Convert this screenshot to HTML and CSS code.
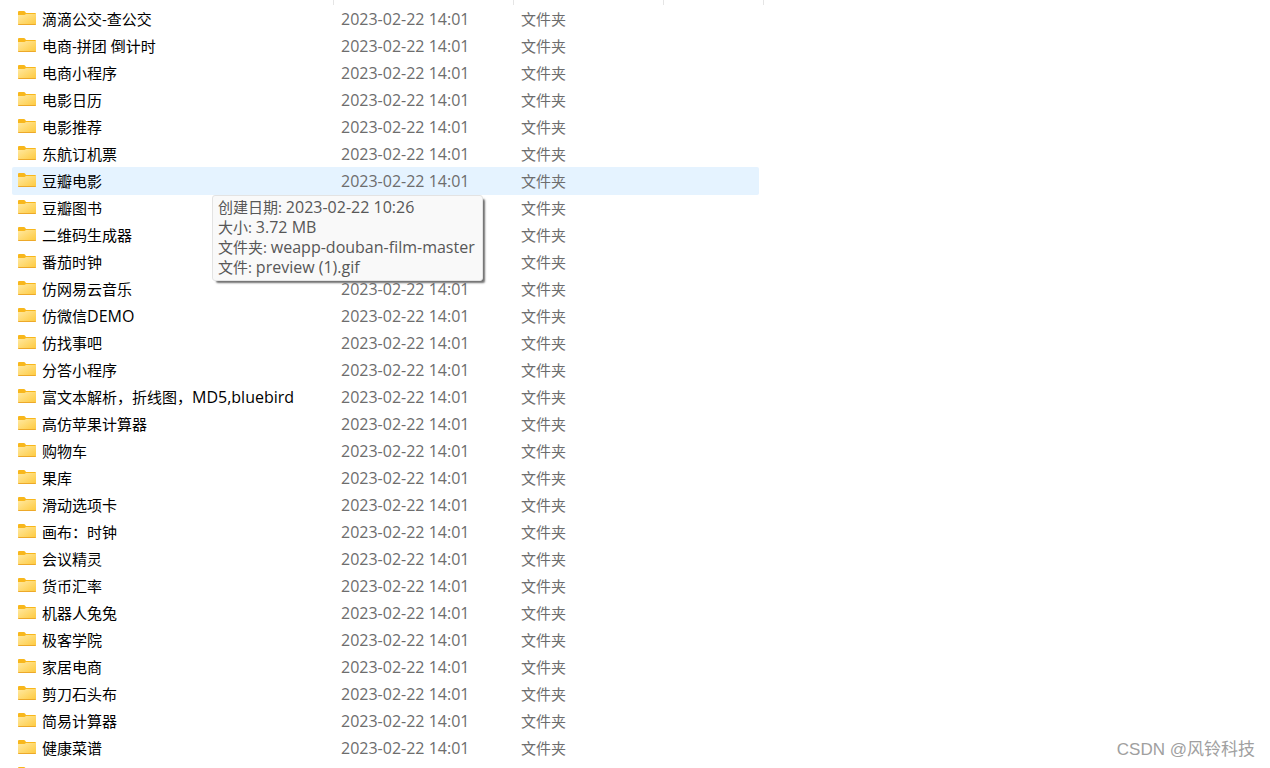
FILE: index.html
```html
<!DOCTYPE html>
<html lang="zh-CN">
<head>
<meta charset="utf-8">
<title>文件夹</title>
<link rel="stylesheet" href="styles.css">
</head>
<body>
<svg class="defs" aria-hidden="true">
  <defs>
    <linearGradient id="front" x1="0" y1="0" x2="1" y2="1">
      <stop offset="0" stop-color="#ffe9a2"/>
      <stop offset="1" stop-color="#fec93c"/>
    </linearGradient>
    <symbol id="folder" viewBox="0 0 18 14">
      <path d="M0 1Q0 0 1 0H6Q6.600 0 7 .5L8 2H17Q18 2 18 3V8H0Z" fill="#f8b71c"/>
      <path d="M0 4H6.500L8 3H18V13Q18 14 17 14H1Q0 14 0 13Z" fill="url(#front)"/>
      <path d="M0 13H18Q18 14 17 14H1Q0 14 0 13Z" fill="#eda92a"/>
    </symbol>
  </defs>
</svg>
<main class="explorer">
  <div class="column-ticks"><span></span><span></span><span></span><span></span></div>
  <table class="files">
    <colgroup><col class="col-name"><col class="col-date"><col class="col-type"><col class="col-size"></colgroup>
    <tbody>
      <tr><td><div class="name"><svg class="icon"><use href="#folder"/></svg>滴滴公交-查公交</div></td><td class="date">2023-02-22 14:01</td><td>文件夹</td><td></td></tr>
      <tr><td><div class="name"><svg class="icon"><use href="#folder"/></svg>电商-拼团 倒计时</div></td><td class="date">2023-02-22 14:01</td><td>文件夹</td><td></td></tr>
      <tr><td><div class="name"><svg class="icon"><use href="#folder"/></svg>电商小程序</div></td><td class="date">2023-02-22 14:01</td><td>文件夹</td><td></td></tr>
      <tr><td><div class="name"><svg class="icon"><use href="#folder"/></svg>电影日历</div></td><td class="date">2023-02-22 14:01</td><td>文件夹</td><td></td></tr>
      <tr><td><div class="name"><svg class="icon"><use href="#folder"/></svg>电影推荐</div></td><td class="date">2023-02-22 14:01</td><td>文件夹</td><td></td></tr>
      <tr><td><div class="name"><svg class="icon"><use href="#folder"/></svg>东航订机票</div></td><td class="date">2023-02-22 14:01</td><td>文件夹</td><td></td></tr>
      <tr class="hovered"><td><div class="name"><svg class="icon"><use href="#folder"/></svg>豆瓣电影</div></td><td class="date">2023-02-22 14:01</td><td>文件夹</td><td></td></tr>
      <tr><td><div class="name"><svg class="icon"><use href="#folder"/></svg>豆瓣图书</div></td><td class="date">2023-02-22 14:01</td><td>文件夹</td><td></td></tr>
      <tr><td><div class="name"><svg class="icon"><use href="#folder"/></svg>二维码生成器</div></td><td class="date">2023-02-22 14:01</td><td>文件夹</td><td></td></tr>
      <tr><td><div class="name"><svg class="icon"><use href="#folder"/></svg>番茄时钟</div></td><td class="date">2023-02-22 14:01</td><td>文件夹</td><td></td></tr>
      <tr><td><div class="name"><svg class="icon"><use href="#folder"/></svg>仿网易云音乐</div></td><td class="date">2023-02-22 14:01</td><td>文件夹</td><td></td></tr>
      <tr><td><div class="name"><svg class="icon"><use href="#folder"/></svg><span>仿微信<span class="latin">DEMO</span></span></div></td><td class="date">2023-02-22 14:01</td><td>文件夹</td><td></td></tr>
      <tr><td><div class="name"><svg class="icon"><use href="#folder"/></svg>仿找事吧</div></td><td class="date">2023-02-22 14:01</td><td>文件夹</td><td></td></tr>
      <tr><td><div class="name"><svg class="icon"><use href="#folder"/></svg>分答小程序</div></td><td class="date">2023-02-22 14:01</td><td>文件夹</td><td></td></tr>
      <tr><td><div class="name"><svg class="icon"><use href="#folder"/></svg><span>富文本解析，折线图，<span class="latin">MD5,bluebird</span></span></div></td><td class="date">2023-02-22 14:01</td><td>文件夹</td><td></td></tr>
      <tr><td><div class="name"><svg class="icon"><use href="#folder"/></svg>高仿苹果计算器</div></td><td class="date">2023-02-22 14:01</td><td>文件夹</td><td></td></tr>
      <tr><td><div class="name"><svg class="icon"><use href="#folder"/></svg>购物车</div></td><td class="date">2023-02-22 14:01</td><td>文件夹</td><td></td></tr>
      <tr><td><div class="name"><svg class="icon"><use href="#folder"/></svg>果库</div></td><td class="date">2023-02-22 14:01</td><td>文件夹</td><td></td></tr>
      <tr><td><div class="name"><svg class="icon"><use href="#folder"/></svg>滑动选项卡</div></td><td class="date">2023-02-22 14:01</td><td>文件夹</td><td></td></tr>
      <tr><td><div class="name"><svg class="icon"><use href="#folder"/></svg>画布：时钟</div></td><td class="date">2023-02-22 14:01</td><td>文件夹</td><td></td></tr>
      <tr><td><div class="name"><svg class="icon"><use href="#folder"/></svg>会议精灵</div></td><td class="date">2023-02-22 14:01</td><td>文件夹</td><td></td></tr>
      <tr><td><div class="name"><svg class="icon"><use href="#folder"/></svg>货币汇率</div></td><td class="date">2023-02-22 14:01</td><td>文件夹</td><td></td></tr>
      <tr><td><div class="name"><svg class="icon"><use href="#folder"/></svg>机器人兔兔</div></td><td class="date">2023-02-22 14:01</td><td>文件夹</td><td></td></tr>
      <tr><td><div class="name"><svg class="icon"><use href="#folder"/></svg>极客学院</div></td><td class="date">2023-02-22 14:01</td><td>文件夹</td><td></td></tr>
      <tr><td><div class="name"><svg class="icon"><use href="#folder"/></svg>家居电商</div></td><td class="date">2023-02-22 14:01</td><td>文件夹</td><td></td></tr>
      <tr><td><div class="name"><svg class="icon"><use href="#folder"/></svg>剪刀石头布</div></td><td class="date">2023-02-22 14:01</td><td>文件夹</td><td></td></tr>
      <tr><td><div class="name"><svg class="icon"><use href="#folder"/></svg>简易计算器</div></td><td class="date">2023-02-22 14:01</td><td>文件夹</td><td></td></tr>
      <tr><td><div class="name"><svg class="icon"><use href="#folder"/></svg>健康菜谱</div></td><td class="date">2023-02-22 14:01</td><td>文件夹</td><td></td></tr>
      <tr><td><div class="name"><svg class="icon"><use href="#folder"/></svg></div></td><td></td><td></td><td></td></tr>
    </tbody>
  </table>
  <div class="tooltip" role="tooltip">
    <div>创建日期: <span class="latin">2023-02-22 10:26</span></div>
    <div>大小: <span class="latin">3.72 MB</span></div>
    <div>文件夹: <span class="latin">weapp-douban-film-master</span></div>
    <div>文件: <span class="latin">preview (1).gif</span></div>
  </div>
  <div class="watermark">CSDN @风铃科技</div>
</main>
</body>
</html>
```
FILE: styles.css
```css
body {
  margin: 0;
  background: #fff;
  color: #000;
  font: 15px/20px "Open Sans", "Noto Sans CJK SC", sans-serif;
}

.defs {
  position: absolute;
  width: 0;
  height: 0;
}

.explorer {
  position: relative;
  height: 100vh;
  overflow: hidden;
  padding-left: 12px;
  box-sizing: border-box;
}

.column-ticks {
  display: grid;
  grid-template-columns: 322px 180px 150px 100px;
  height: 5px;
}

.column-ticks span {
  border-right: 1px solid #e5e5e5;
}

.files {
  width: 747px;
  table-layout: fixed;
  border-collapse: separate;
  border-spacing: 0;
}

.col-name { width: 321px; }
.col-date { width: 180px; }
.col-type { width: 150px; }

.files td {
  height: 27px;
  box-sizing: border-box;
  padding: 1px 0 0 8px;
  color: #6d6d6d;
  white-space: nowrap;
}

.files td:first-child {
  padding-left: 6px;
  color: #000;
}

.files .date,
.latin {
  font-size: 16px;
}

.name {
  display: flex;
  align-items: center;
  gap: 6px;
}

.icon {
  width: 18px;
  height: 14px;
  flex: none;
  margin-bottom: 2px;
}

.hovered td {
  background: #e5f3ff;
  box-shadow: 0 1px #e5f3ff;
}

.hovered td:first-child { border-radius: 2px 0 0 2px; }
.hovered td:last-child { border-radius: 0 2px 2px 0; }

.tooltip {
  position: absolute;
  left: 212px;
  top: 195px;
  padding: 1px 7px 3px 5px;
  border: 1px solid #e3e3e3;
  border-radius: 3px;
  background: #f9f9f9;
  box-shadow: 3px 3px 2px -1px #707070;
  color: #575757;
  white-space: nowrap;
}

.watermark {
  position: absolute;
  right: 15px;
  bottom: 8px;
  color: #a0a0a0;
  font: 17px/20px "Liberation Sans", "Noto Sans CJK SC", sans-serif;
}
```
